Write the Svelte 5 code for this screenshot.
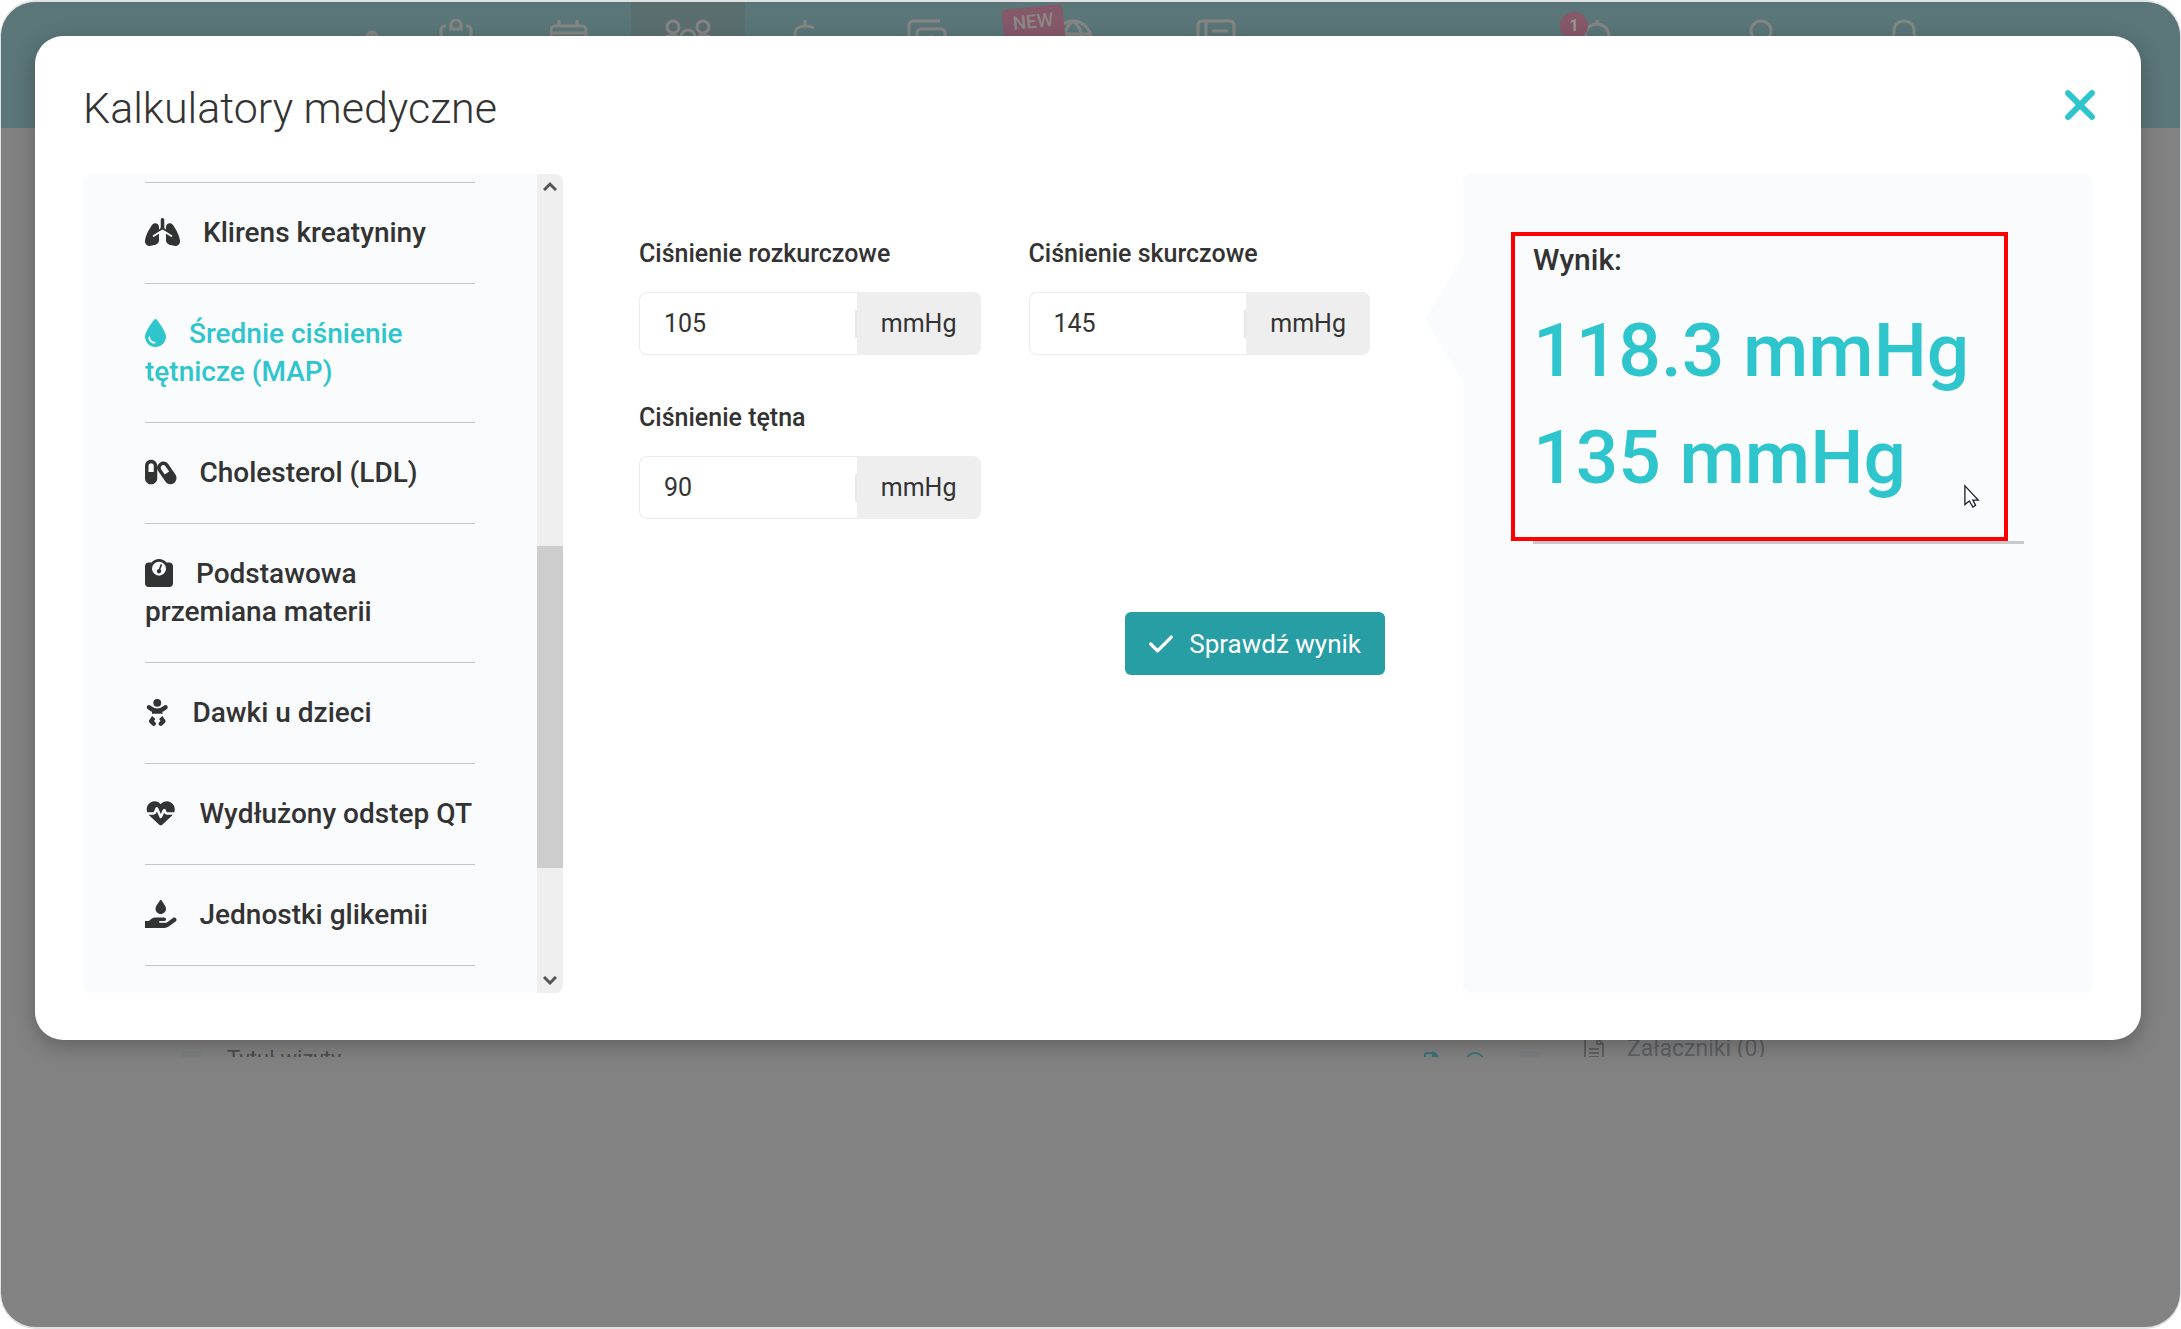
<script lang="ts">
    type NavItem = { name: string; width: number; active?: boolean; tag?: string; count?: number };

    const mainNav: NavItem[] = [
        { name: "mic", width: 64 },
        { name: "clipboard", width: 104 },
        { name: "calendar", width: 122 },
        { name: "users", width: 114, active: true },
        { name: "dollar", width: 120 },
        { name: "cards", width: 124 },
        { name: "globe", width: 168, tag: "NEW" },
        { name: "book", width: 118 },
    ];

    const userNav: NavItem[] = [
        { name: "alarm", width: 164, count: 1 },
        { name: "user", width: 164 },
        { name: "bell", width: 122 },
    ];

    const navPaths: Record<string, string> = {
        mic: "M14 26v-8a5 5 0 0 1 10 0v8M19 14v12",
        clipboard: "M9 7H8a4 4 0 0 0-4 4v24h30V11a4 4 0 0 0-4-4h-1M12 10h14M15 9a5 5 0 1 1 8 0",
        calendar: "M9 1v7M27 1v7M1 36V11a4 4 0 0 1 4-4h27a4 4 0 0 1 4 4v25zM1 14h35",
        users: "M3 8a6 6 0 1 0 12 0a6 6 0 1 0-12 0M33 8a6 6 0 1 0 12 0a6 6 0 1 0-12 0M17 18a7 7 0 1 1 14 0a7 7 0 1 1-14 0M4 17h10M34 17h10M1 24v-3a4 4 0 0 1 3-4M47 24v-3a4 4 0 0 0-3-4",
        dollar: "M20 1v7M29 9c-4-2-7-2-9-2-6 0-10 3-10 8 0 10 20 5 20 14 0 6-12 7-20 3",
        cards: "M2 28V6a4 4 0 0 1 4-4h27M10 28V14a4 4 0 0 1 4-4h20a4 4 0 0 1 4 4v20H10zM24 16v8",
        globe: "M2 20a18 18 0 1 1 36 0a18 18 0 1 1-36 0M20 2c-12 10-12 26 0 36M20 2c12 10 12 26 0 36M4 15h32",
        book: "M2 38V6a4 4 0 0 1 4-4h28a4 4 0 0 1 4 4v32zM10 2v36M16 12h16",
        alarm: "M20 1v4M8 26v-9a12 12 0 0 1 24 0v9z",
        user: "M10 12a10 10 0 1 1 20 0a10 10 0 1 1-20 0M3 38a17 14 0 0 1 34 0",
        bell: "M10 15v-4a10 9 0 0 1 20 0v4l4 9H6z",
    };

    const calculators = [
        {
            label: "Klirens kreatyniny",
            width: 640,
            path: "M320 0c-17.7 0-32 14.3-32 32v132c0 16.400-8.400 31.700-22.200 40.500L256 210.800v38L320 208l64 40.800v-38l-9.800-6.200C360.400 195.800 352 180.500 352 164V32c0-17.700-14.300-32-32-32zM256 165.300C256 127 225 96 186.700 96c-21.700 0-42.800 10.200-55.800 28.800C85 190 14 310 0 412v11c0 49.100 39.800 89 89 89 7.200 0 14.500-.9 21.500-2.700l81.800-20.500C229.700 478.900 256 445.300 256 406.900V286.600l-90.500 57.600c-7.500 4.700-17.300 2.500-22.100-4.900s-2.500-17.300 4.900-22.100L256 248.800zM384 165.300C384 127 415 96 453.300 96c21.700 0 42.800 10.200 55.800 28.800C555 190 626 310 640 412v11c0 49.100-39.800 89-89 89-7.200 0-14.500-.9-21.500-2.700l-81.800-20.500C410.300 478.900 384 445.300 384 406.900V286.600l90.500 57.600c7.500 4.700 17.300 2.500 22.100-4.900s2.500-17.300-4.900-22.100L384 248.800z",
        },
        {
            label: "Średnie ciśnienie tętnicze (MAP)",
            width: 384,
            active: true,
            path: "M192 512C86 512 0 426 0 320C0 228.800 130.200 57.700 166.600 11.700C172.600 4.200 181.500 0 191.100 0h1.800c9.600 0 18.500 4.200 24.500 11.700C253.800 57.700 384 228.800 384 320c0 106-86 192-192 192zM96 336c0-8.800-7.200-16-16-16s-16 7.200-16 16c0 61.900 50.100 112 112 112c8.800 0 16-7.200 16-16s-7.200-16-16-16c-44.200 0-80-35.800-80-80z",
        },
        {
            label: "Cholesterol (LDL)",
            width: 576,
            path: "M64 144c0-26.500 21.500-48 48-48s48 21.500 48 48V256H64V144zM0 144V368c0 61.900 50.100 112 112 112s112-50.100 112-112V189.600c1.800 19.100 8.200 38 19.800 54.800L372.300 431.700c35.500 51.700 105.300 64.300 156 28.100s63-107.500 27.500-159.200L427.300 113.300C391.800 61.500 321.900 49 271.300 85.200c-28 20-44.300 50.800-47.300 83V144c0-61.900-50.100-112-112-112S0 82.100 0 144zm296.600 64.200c-16-23.300-10-55.300 11.900-71c21.200-15.100 50.500-10.300 66 12.200l67 97.600L361.600 303l-65-94.800z",
        },
        {
            label: "Podstawowa przemiana materii",
            width: 512,
            path: "M128 176a128 128 0 1 1 256 0a128 128 0 1 1-256 0zM391.800 64C359.500 24.900 310.700 0 256 0S152.500 24.900 120.200 64H64C28.700 64 0 92.700 0 128V448c0 35.300 28.700 64 64 64H448c35.300 0 64-28.700 64-64V128c0-35.300-28.700-64-64-64H391.800zM296 224a40 40 0 1 1-43-40l28-79c4-15 34-8 29 11l-28 78c9 8 14 18 14 30z",
        },
        {
            label: "Dawki u dzieci",
            width: 448,
            path: "M152 88a72 72 0 1 1 144 0A72 72 0 1 1 152 88zM39.700 144.500c13-17.900 38-21.800 55.900-8.800L131.800 162c26.800 19.500 59.100 30 92.200 30s65.400-10.500 92.200-30l36.200-26.400c17.900-13 42.900-9 55.900 8.800s9 42.900-8.800 55.900l-36.200 26.400c-13.600 9.900-28.100 18.200-43.300 25V288H128V251.700c-15.200-6.700-29.700-15.100-43.300-25L48.500 200.300c-17.900-13-21.800-38-8.800-55.900zm89.800 184.800l60.600 53-26 37.200 24.300 24.300c15.600 15.600 15.600 40.900 0 56.600s-40.900 15.600-56.600 0l-48-48C70 438.600 68.100 417 79.200 401.100l50.200-71.800zm128.500 53l60.600-53 50.200 71.800c11.100 15.900 9.200 37.500-4.500 51.200l-48 48c-15.600 15.600-40.900 15.600-56.600 0s-15.600-40.900 0-56.600L284 419.400l-26-37.200z",
        },
        {
            label: "Wydłużony odstep QT",
            width: 576,
            shift: 32,
            path: "M228.300 469.100L47.600 300.400c-4.200-3.900-8.200-8.100-11.900-12.400h87c22.600 0 43-13.600 51.700-34.500l10.500-25.200 49.300 109.500c3.800 8.500 12.100 14 21.400 14.100s17.800-5 22-13.300L320 253.700l1.700 3.400c9.500 19 28.900 31 50.100 31H476.300c-3.700 4.300-7.700 8.500-11.900 12.400L283.700 469.100c-7.500 7-17.400 10.900-27.700 10.900s-20.200-3.900-27.700-10.900zM503.700 240h-132c-3 0-5.800-1.700-7.200-4.400l-23.200-46.300c-4.100-8.100-12.400-13.300-21.500-13.300s-17.400 5.100-21.500 13.300l-41.400 82.800L205.900 158.200c-3.900-8.700-12.700-14.300-22.200-14.100s-18.100 5.900-21.800 14.800l-31.800 76.300c-1.200 3-4.200 4.900-7.400 4.900H8.700C3 225.200 0 208.200 0 190.900v-5.800c0-69.900 50.500-129.500 119.400-141C165 36.500 211.400 51.400 244 84l12 12 12-12c32.600-32.600 79-47.500 124.600-39.900C461.500 55.600 512 115.200 512 185.100v5.800c0 16.900-2.800 33.500-8.300 49.100z",
        },
        {
            label: "Jednostki glikemii",
            width: 576,
            path: "M275.500 6.600C278.300 2.500 283 0 288 0s9.700 2.500 12.500 6.600L366.800 103C378 119.300 384 138.600 384 158.300V160c0 53-43 96-96 96s-96-43-96-96v-1.700c0-19.800 6-39 17.200-55.300L275.500 6.600zM568.200 336.300c13.100 17.800 9.300 42.800-8.500 55.900L433.100 485.500c-23.400 17.200-51.600 26.500-80.700 26.500H0V384H68.800l44.900-36c22.700-18.200 50.900-28 80-28H352c17.700 0 32 14.300 32 32s-14.300 32-32 32H272c-8.800 0-16 7.200-16 16s7.200 16 16 16H392.600l119.700-88.200c17.800-13.100 42.800-9.300 55.900 8.500z",
        },
    ];

    let fields = $state([
        { id: "diastolic", label: "Ciśnienie rozkurczowe", value: "105" },
        { id: "systolic", label: "Ciśnienie skurczowe", value: "145" },
        { id: "pulse", label: "Ciśnienie tętna", value: "90" },
    ]);

    let results = ["118.3 mmHg", "135 mmHg"];
</script>

{#snippet navItem(item: NavItem)}
    <a href="#{item.name}" class="nav-item" class:active={item.active} style:width="{item.width}px" aria-label={item.name}>
        <span class="nav-icon">
            <svg viewBox={item.name === "users" ? "0 0 48 40" : "0 0 40 40"} height="40">
                <path d={navPaths[item.name]} />
            </svg>
            {#if item.tag}<span class="tag">{item.tag}</span>{/if}
            {#if item.count}<span class="count">{item.count}</span>{/if}
        </span>
    </a>
{/snippet}

<div class="app">
    <div class="backdrop">
        <header class="topbar">
            <nav class="nav">
                {#each mainNav as item}
                    {@render navItem(item)}
                {/each}
            </nav>
            <nav class="nav">
                {#each userNav as item}
                    {@render navItem(item)}
                {/each}
            </nav>
        </header>
        <div class="page">
            <div class="visit">
                <span class="visit-title">Tytuł wizyty</span>
                <span class="visit-tools">
                    <svg width="18" height="20" viewBox="0 0 18 20"><path d="M2 20V4a2 2 0 0 1 2-2h8l4 5v13" /><path class="solid" d="M10 2l7 7h-7z" /></svg>
                    <svg width="20" height="20" viewBox="0 0 20 20"><circle cx="10" cy="11" r="9" /><path d="M10 6v8" /></svg>
                </span>
            </div>
            <div class="attachments">
                <svg width="20" height="26" viewBox="0 0 20 26"><path d="M1 26V1h12l6 6v19M13 1v6h6M5 12h10M5 16h10M5 20h10" /></svg>
                <span>Załączniki (0)</span>
            </div>
        </div>
    </div>

    <div class="modal" role="dialog" aria-labelledby="modal-title">
        <div class="modal-header">
            <h1 id="modal-title">Kalkulatory medyczne</h1>
            <button class="close" aria-label="Zamknij">
                <svg width="30" height="30" viewBox="32 96 320 320"><path d="M342.600 150.600c12.500-12.500 12.500-32.800 0-45.300s-32.800-12.500-45.300 0L192 210.700 86.600 105.400c-12.500-12.500-32.800-12.500-45.300 0s-12.500 32.800 0 45.300L146.700 256 41.400 361.400c-12.500 12.500-12.500 32.800 0 45.300s32.800 12.500 45.300 0L192 301.300 297.400 406.600c12.500 12.500 32.800 12.500 45.300 0s12.500-32.800 0-45.300L237.300 256 342.600 150.600z" /></svg>
            </button>
        </div>

        <div class="modal-body">
            <aside class="sidebar">
                <ul>
                    {#each calculators as calc}
                        <li>
                            <a href="#calc" class:active={calc.active}>
                                <svg height="28" width={(calc.width / 512) * 28} viewBox="{-(calc.shift ?? 0)} 0 {calc.width} 512"><path fill-rule="evenodd" d={calc.path} /></svg>
                                {calc.label}
                            </a>
                        </li>
                    {/each}
                </ul>
                <div class="scrollbar">
                    <svg width="14" height="10" viewBox="0 0 14 10"><path d="M1 9l6-6 6 6" /></svg>
                    <div class="track"><div class="thumb"></div></div>
                    <svg width="14" height="10" viewBox="0 0 14 10"><path d="M1 1l6 6 6-6" /></svg>
                </div>
            </aside>

            <form class="form">
                <div class="fields">
                    {#each fields as field}
                        <div class="field">
                            <label for={field.id}>{field.label}</label>
                            <div class="input-group">
                                <input id={field.id} type="text" bind:value={field.value} />
                                <span class="unit">mmHg</span>
                            </div>
                        </div>
                    {/each}
                </div>
                <button type="button" class="submit">
                    <svg width="24" height="18" viewBox="0 88 448 336"><path d="M438.600 105.400c12.500 12.500 12.500 32.800 0 45.300l-256 256c-12.500 12.500-32.800 12.500-45.300 0l-128-128c-12.500-12.500-12.500-32.800 0-45.300s32.800-12.500 45.300 0L160 338.700 393.400 105.400c12.500-12.500 32.800-12.500 45.300 0z" /></svg>
                    Sprawdź wynik
                </button>
            </form>

            <section class="result">
                <div class="result-box">
                    <h2>Wynik:</h2>
                    {#each results as result}
                        <p>{result}</p>
                    {/each}
                    <svg class="cursor" width="16" height="25" viewBox="0 0 18 26"><path d="M1 1v21l5-4 4 7 3-2-3-6h6z" /></svg>
                </div>
                <hr />
            </section>
        </div>
    </div>
</div>

<style>
    :global(body) {
        background: #fff;
        font-family: Roboto, sans-serif;
        color: #333;
    }

    .app {
        display: grid;
        grid-template-columns: minmax(0, 1fr);
        box-sizing: border-box;
        min-height: 100vh;
        border: 1px solid #dfe1e3;
        border-width: 2px 1px;
        border-radius: 36px;
        background: #828282;
        overflow: hidden;
    }

    /* dimmed page and dialog share one grid cell */
    .backdrop,
    .modal {
        grid-area: 1 / 1;
    }

    .topbar {
        display: flex;
        justify-content: space-between;
        height: 126px;
        padding: 0 215px 0 340px;
        background: #5a7678;
    }

    .nav {
        display: flex;
    }

    .nav-item {
        display: flex;
        justify-content: center;
        padding-top: 17px;
    }

    .nav-item.active {
        background: #5a6e70;
    }

    .nav-icon {
        position: relative;
        height: 40px;
    }

    .nav-icon svg {
        fill: none;
        stroke: #858684;
        stroke-width: 3;
    }

    .tag {
        position: absolute;
        top: -12px;
        left: -50px;
        padding: 2px 10px 8px;
        border-radius: 4px;
        background: #85586a;
        color: #8c8886;
        font-size: 19px;
        line-height: 26px;
        font-weight: 500;
        transform: rotate(-6deg);
    }

    .count {
        position: absolute;
        top: -7px;
        left: -17px;
        width: 28px;
        border-radius: 50%;
        background: #85586a;
        color: #9b9593;
        font-size: 16px;
        line-height: 28px;
        font-weight: 700;
        text-align: center;
    }

    .page {
        display: flex;
        align-items: flex-end;
        height: 929px;
        padding-left: 180px;
        overflow: hidden;
    }

    .visit {
        display: flex;
        justify-content: space-between;
        flex: 1;
        height: 6px;
        padding: 0 35px 0 26px;
        border: solid #7b7f7f;
        border-width: 0 20px;
    }

    .visit-title {
        font-size: 22px;
        line-height: 16px;
        color: #4e4e4e;
    }

    .visit-tools {
        display: flex;
        gap: 24px;
    }

    .page svg {
        fill: none;
        stroke: #3d7477;
        stroke-width: 2;
    }

    .page svg .solid {
        fill: #3d7477;
    }

    .attachments {
        display: flex;
        gap: 23px;
        width: 596px;
        height: 20px;
        padding-left: 44px;
        font-size: 23px;
        line-height: 24px;
        color: #5e6062;
    }

    .page .attachments svg {
        stroke: #5e6062;
    }

    .modal {
        align-self: start;
        margin: 34px 39px 34px 34px;
        padding: 0 48px 47px;
        border-radius: 28px;
        background: #fff;
        box-shadow: 0 6px 20px rgba(0, 0, 0, 0.25);
        z-index: 1;
    }

    .modal-header {
        display: flex;
        justify-content: space-between;
        align-items: center;
        height: 138px;
    }

    h1 {
        margin: 0;
        padding-top: 6px;
        font-size: 43px;
        line-height: 52px;
        font-weight: 300;
    }

    .close {
        display: flex;
        margin-right: -2px;
        padding: 0;
        border: none;
        background: none;
        cursor: pointer;
    }

    .close svg {
        fill: #2fc5cc;
    }

    .modal-body {
        display: grid;
        grid-template-columns: minmax(0, 16fr) minmax(0, 30fr) minmax(0, 21fr);
    }

    .sidebar {
        display: flex;
        height: 819px;
        border-radius: 8px;
        background: #fafbfd;
        overflow: hidden;
    }

    .sidebar ul {
        flex: 1;
        align-self: flex-start;
        margin: 8px 62px 0;
        padding: 0;
        border-bottom: 1px solid #c4c5c6;
        list-style: none;
    }

    .sidebar li {
        padding: 31px 0;
        border-top: 1px solid #c4c5c6;
    }

    .sidebar a {
        display: block;
        font-size: 28px;
        line-height: 38px;
        font-weight: 500;
        color: #333;
        text-decoration: none;
    }

    .sidebar a.active {
        color: #2fc5cc;
    }

    .sidebar a svg {
        margin-right: 16px;
        vertical-align: -4px;
        fill: currentColor;
    }

    .scrollbar {
        display: flex;
        flex-direction: column;
        align-items: center;
        justify-content: space-between;
        flex: none;
        box-sizing: border-box;
        width: 26px;
        padding: 7px 0;
        background: #efefef;
    }

    .scrollbar svg {
        fill: none;
        stroke: #555;
        stroke-width: 3;
    }

    .track {
        align-self: stretch;
        flex: 1;
        padding-top: 355px;
    }

    .thumb {
        height: 322px;
        background: #cdcdcd;
    }

    .form {
        padding: 65px 78px 0 76px;
    }

    .fields {
        display: grid;
        grid-template-columns: repeat(2, minmax(0, 1fr));
        gap: 48px;
        padding-right: 15px;
    }

    .field label {
        display: block;
        margin-bottom: 23px;
        font-size: 25px;
        line-height: 30px;
        font-weight: 500;
    }

    .input-group {
        display: flex;
        height: 63px;
    }

    .input-group input {
        flex: 1;
        min-width: 0;
        box-sizing: border-box;
        padding: 0 24px;
        border: 1px solid #e8ebef;
        border-right: none;
        border-radius: 8px 0 0 8px;
        font: 25px Roboto, sans-serif;
        color: #333;
    }

    .unit {
        position: relative;
        padding: 0 24px;
        border-radius: 0 8px 8px 0;
        background: #eee;
        font-size: 25px;
        line-height: 63px;
    }

    .unit::before {
        content: "";
        position: absolute;
        top: 18px;
        left: -2px;
        width: 2px;
        height: 28px;
        background: #e6e8ea;
    }

    .submit {
        display: flex;
        align-items: center;
        gap: 16px;
        height: 63px;
        margin: 93px 0 0 auto;
        padding: 0 24px;
        border: none;
        border-radius: 6px;
        background: #279da4;
        color: #fff;
        font: 26px Roboto, sans-serif;
        cursor: pointer;
    }

    .submit svg {
        fill: #fff;
    }

    .result {
        position: relative;
        padding: 58px 69px 0 48px;
        border-radius: 8px;
        background: #fafbfd;
    }

    .result::before {
        content: "";
        position: absolute;
        top: 82px;
        left: -38px;
        border: solid transparent;
        border-width: 63px 38px 63px 0;
        border-right-color: #fafbfd;
    }

    .result-box {
        position: relative;
        box-sizing: border-box;
        height: 309px;
        margin-right: 16px;
        padding: 6px 18px;
        border: 4px solid #f00;
    }

    h2 {
        margin: 0 0 19px;
        font-size: 30px;
        line-height: 36px;
        font-weight: 500;
    }

    .result-box p {
        margin: 0;
        font-size: 75px;
        line-height: 107px;
        font-weight: 500;
        color: #2fc5cc;
        white-space: nowrap;
    }

    .cursor {
        position: absolute;
        right: 24px;
        bottom: 28px;
        fill: #fff;
        stroke: #223;
        stroke-width: 1.5;
    }

    hr {
        height: 3px;
        margin: 0 0 0 22px;
        border: none;
        background: #c8c9ca;
    }
</style>
